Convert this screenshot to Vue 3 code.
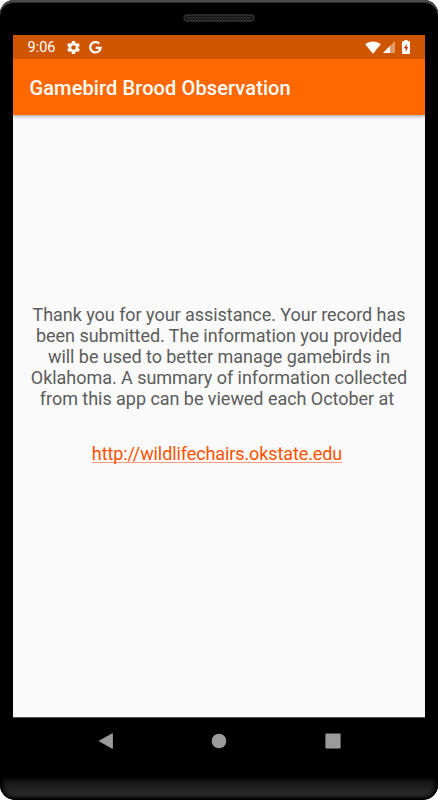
<script setup>
const lines = [
  'Thank you for your assistance. Your record has',
  'been submitted. The information you provided',
  'will be used to better manage gamebirds in',
  'Oklahoma. A summary of information collected',
  'from this app can be viewed each October at',
]
</script>

<template>
  <div class="phone">
    <div class="top-bezel">
      <svg class="speaker" width="72" height="8" viewBox="0 0 72 8">
        <rect x="1" y="1" width="70" height="6" rx="3" fill="#151515" stroke="#333" stroke-width="1.3" />
        <path d="M4 3.5H68" stroke="#404040" stroke-dasharray="1.5 1.5" />
        <path d="M5.5 5H67" stroke="#3c3c3c" stroke-dasharray="1.5 1.5" />
      </svg>
    </div>
    <div class="screen">
      <div class="status">
        <span class="time">9:06</span>
        <svg class="gear" width="13" height="13" viewBox="2 2 20 20">
          <path fill="#fff" d="M19.43 12.98c.04-.32.07-.64.07-.98s-.03-.66-.07-.98l2.11-1.65c.19-.15.24-.42.12-.64l-2-3.46c-.12-.22-.39-.3-.61-.22l-2.49 1c-.52-.4-1.08-.73-1.69-.98l-.38-2.65A.49.49 0 0 0 14 2h-4c-.25 0-.46.18-.49.42l-.38 2.65c-.61.25-1.17.59-1.69.98l-2.49-1c-.23-.09-.49 0-.61.22l-2 3.46c-.13.22-.07.49.12.64l2.11 1.65c-.04.32-.07.65-.07.98s.03.66.07.98l-2.11 1.65c-.19.15-.24.42-.12.64l2 3.46c.12.22.39.3.61.22l2.49-1c.52.4 1.08.73 1.69.98l.38 2.65c.03.24.24.42.49.42h4c.25 0 .46-.18.49-.42l.38-2.65c.61-.25 1.17-.59 1.69-.98l2.49 1c.23.09.49 0 .61-.22l2-3.46c.12-.22.07-.49-.12-.64l-2.11-1.65zM12 15.5a3.5 3.5 0 1 1 0-7 3.5 3.5 0 0 1 0 7z" />
        </svg>
        <svg class="google" width="13" height="13" viewBox="0 0 13 13">
          <path d="M10.2 2.6A5.2 5.2 0 1 0 11.6 6.8H6.7" fill="none" stroke="#fff" stroke-width="2.3" />
        </svg>
        <div class="indicators">
          <svg width="16" height="13" viewBox="0 0 16 13">
            <path d="M0.2 3.2C4.8-.4 11.2-.4 15.8 3.2L8 12.8Z" fill="#fff" />
          </svg>
          <svg width="12" height="12" viewBox="0 0 12 12">
            <path d="M12 0V12H0Z" fill="#e39a65" />
            <path d="M7 5V12H0Z" fill="#fff" />
          </svg>
          <svg class="battery" width="8" height="14" viewBox="0 0 8 14">
            <path d="M2.5 0H5.5V1.2H7.2Q8 1.2 8 2V13.2Q8 14 7.2 14H.8Q0 14 0 13.2V2Q0 1.2.8 1.2H2.5Z" fill="#fff" />
            <path d="M5 3.7L1.8 8.3H3.6V11.8L6.3 7H4.5Z" fill="#d03000" />
          </svg>
        </div>
      </div>
      <header class="app-bar"><h1>Gamebird Brood Observation</h1></header>
      <main>
        <p><span v-for="line in lines" :key="line">{{ line }}</span></p>
        <a href="#">http://wildlifechairs.okstate.edu</a>
      </main>
    </div>
    <nav>
      <svg width="16" height="18" viewBox="0 0 16 18"><path d="M.5 9L14.2 1.3Q14.9 1 14.9 1.7V16.3Q14.9 17 14.2 16.7Z" fill="#9b9b9b" /></svg>
      <svg width="16" height="16" viewBox="0 0 16 16"><circle cx="8" cy="8" r="7.3" fill="#9b9b9b" /></svg>
      <svg width="16" height="16" viewBox="0 0 16 16"><rect x=".4" y=".4" width="15.2" height="15.2" rx="1" fill="#9b9b9b" /></svg>
    </nav>
    <div class="chin"></div>
  </div>
</template>

<style>
body { background: #fff; }
</style>

<style scoped>
.phone {
  width: 438px;
  height: 800px;
  box-sizing: border-box;
  display: flex;
  flex-direction: column;
  background: #000;
  border-radius: 14px 14px 15px 15px;
  overflow: hidden;
  box-shadow: inset 0 2px #4b4b4b, inset 0 3px #303030;
  font-family: Roboto, sans-serif;
}
.top-bezel { height: 35px; flex: none; display: flex; justify-content: center; }
.speaker { margin-top: 13.5px; }
.screen {
  width: 412px;
  height: 683px;
  flex: none;
  margin-left: 13px;
  display: flex;
  flex-direction: column;
  background: #fafafa;
  box-sizing: border-box;
  border-bottom: 1px solid #555;
}
.status {
  height: 24px;
  flex: none;
  display: flex;
  align-items: center;
  background: #d05500;
  color: #fff;
  padding: 0 15px 0 14.5px;
}
.time { font-size: 14.5px; line-height: 24px; width: 39px; white-space: nowrap; padding-top: 1px; }
.google { margin-left: 9px; }
.indicators { margin-left: auto; display: flex; align-items: center; gap: 2px; }
.battery { margin-left: 5px; }
.app-bar {
  height: 56px;
  flex: none;
  display: flex;
  align-items: center;
  background: #ff6700;
  padding-left: 16.5px;
  box-shadow: 0 1px 4px rgba(0, 0, 0, .4);
  clip-path: inset(0 0 -6px 0);
}
h1 { margin: 0; padding-top: 2px; font-size: 20px; line-height: 24px; font-weight: 500; letter-spacing: .11px; color: #fff; white-space: nowrap; }
main { display: flex; flex-direction: column; align-items: center; padding-top: 189px; }
p { margin: 0; text-align: center; font-size: 18px; line-height: 21px; letter-spacing: -.04px; color: #5c5c5c; }
p span { display: block; white-space: nowrap; }
p span:last-child { padding-right: 4px; }
a {
  margin: 34px 4px 0 0;
  font-size: 18px;
  line-height: 21px;
  letter-spacing: -.1px;
  color: #ff5200;
  text-decoration: underline;
  text-decoration-color: #ff9880;
  text-decoration-skip-ink: none;
  text-decoration-thickness: 1px;
  text-underline-offset: 2px;
}
nav { height: 60px; flex: none; display: flex; justify-content: center; align-items: center; gap: 97.5px; padding-bottom: 14px; box-sizing: border-box; }
.chin {
  height: 22px;
  flex: none;
  background: linear-gradient(#101010, #292929 72%, #1c1c1c 85%, #000);
  border-radius: 0 0 15px 15px;
  box-shadow: inset 4px 0 4px -1px #000, inset -4px 0 4px -1px #000;
}
</style>
